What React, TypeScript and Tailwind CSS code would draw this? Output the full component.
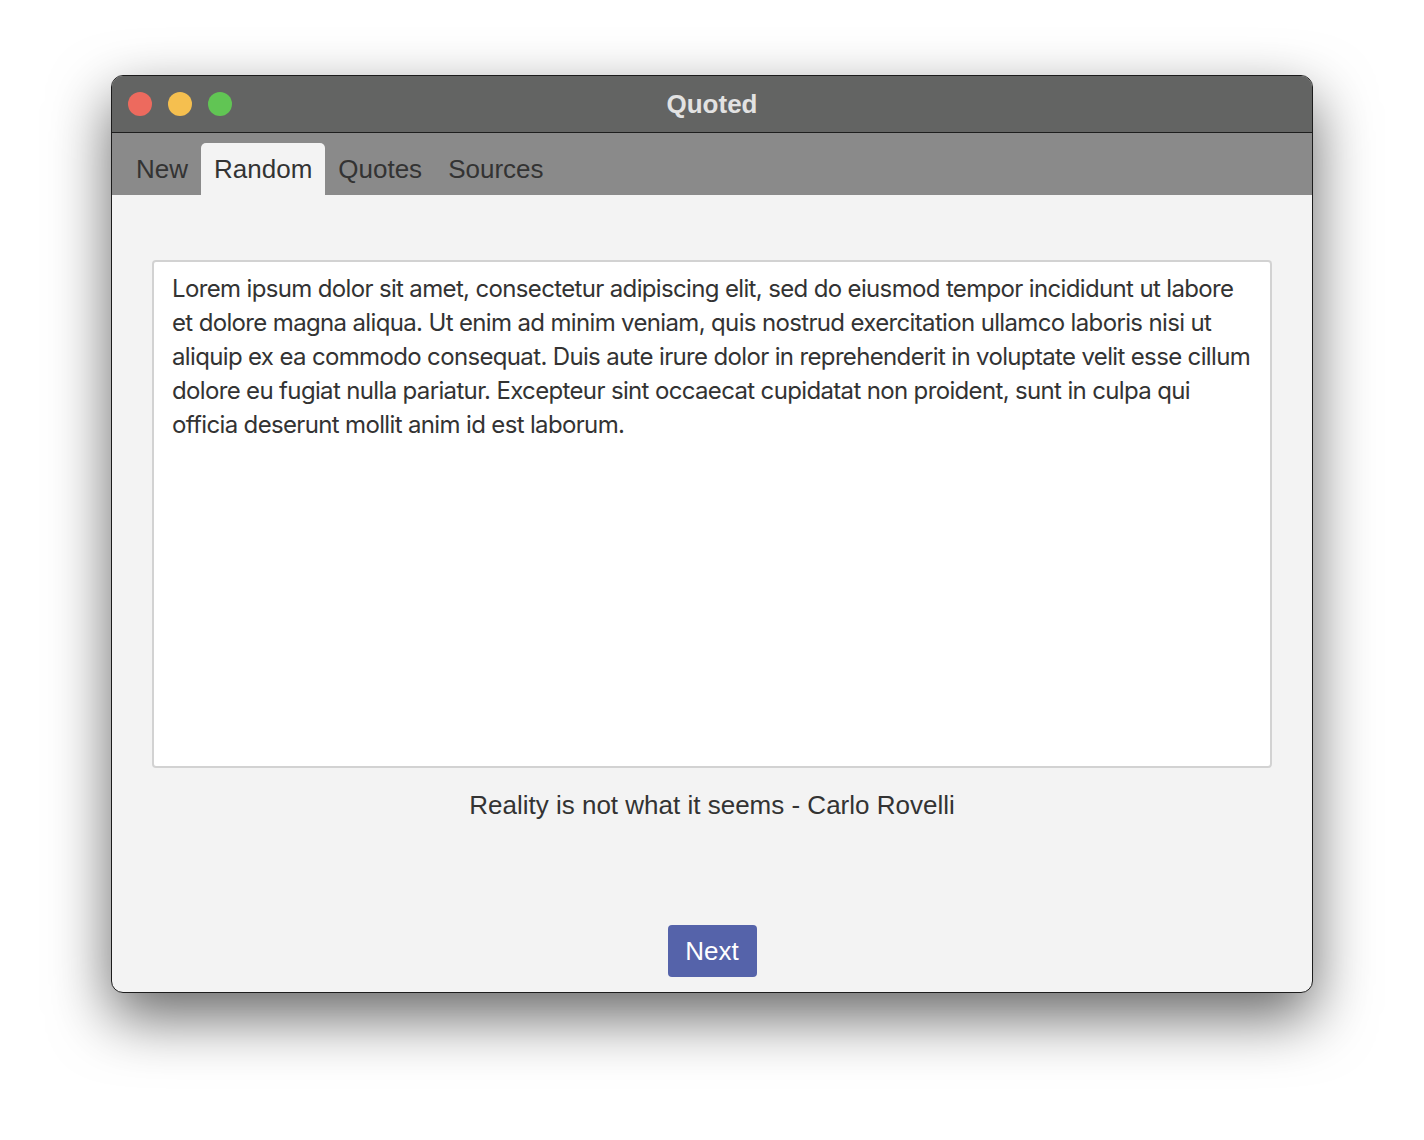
const tabs = ['New', 'Random', 'Quotes', 'Sources'];

// lines broken where the reference breaks them
const quoteLines = [
  'Lorem ipsum dolor sit amet, consectetur adipiscing elit, sed do eiusmod tempor incididunt ut labore',
  'et dolore magna aliqua. Ut enim ad minim veniam, quis nostrud exercitation ullamco laboris nisi ut',
  'aliquip ex ea commodo consequat. Duis aute irure dolor in reprehenderit in voluptate velit esse cillum',
  'dolore eu fugiat nulla pariatur. Excepteur sint occaecat cupidatat non proident, sunt in culpa qui',
  'officia deserunt mollit anim id est laborum.',
];

const App = () => {
  const active = 'Random';

  return (
    <div className="flex h-[1140px] w-[1424px] justify-center bg-white pt-[75px] font-['Liberation_Sans',sans-serif]">
      <div className="flex h-[918px] w-[1202px] flex-col overflow-hidden rounded-[12px] border border-[#1c1c1c] bg-[#f3f3f3] shadow-[0_24px_60px_rgba(0,0,0,0.6)]">
        {/* title bar */}
        <div className="relative flex h-[57px] shrink-0 items-center border-b border-[#1e1e1e] bg-[#636463]">
          <div className="flex gap-4 pl-[16px]">
            <span className="h-6 w-6 rounded-full bg-[#ed6a5e]" />
            <span className="h-6 w-6 rounded-full bg-[#f5bf4f]" />
            <span className="h-6 w-6 rounded-full bg-[#61c554]" />
          </div>
          <div className="absolute inset-0 flex items-center justify-center text-[26px] font-bold text-[#e2e2e2]">
            Quoted
          </div>
        </div>

        {/* tabs */}
        <div className="flex h-[62px] shrink-0 items-end bg-[#8a8a8a] pl-[11px]">
          {tabs.map((t) => (
            <div
              key={t}
              className={
                t === active
                  ? 'flex h-[52px] items-center rounded-t-[5px] bg-[#f3f3f3] px-[13px] pt-[1px] text-[26px] text-[#333]'
                  : 'flex h-[52px] items-center px-[13px] pt-[1px] text-[26px] text-[#333]'
              }
            >
              {t}
            </div>
          ))}
        </div>

        {/* content */}
        <div className="flex flex-1 flex-col items-center px-10 pt-[65px]">
          <div className="h-[508px] w-full overflow-hidden rounded-[4px] border-2 border-[#d2d2d2] bg-white pl-[18px] pr-[4px] pt-[10px] font-['Inter',sans-serif] text-[24px] leading-[34px] tracking-[-0.65px] text-[#333]">
            {quoteLines.map((line) => (
              <div key={line} className="whitespace-nowrap">
                {line}
              </div>
            ))}
          </div>
          <div className="mt-[18px] text-[26px] text-[#333]">
            Reality is not what it seems - Carlo Rovelli
          </div>
          <button className="mt-[100px] h-[52px] w-[89px] rounded-[4px] bg-[#5563aa] text-[26px] text-white">
            Next
          </button>
        </div>
      </div>
    </div>
  );
};

export default App;
